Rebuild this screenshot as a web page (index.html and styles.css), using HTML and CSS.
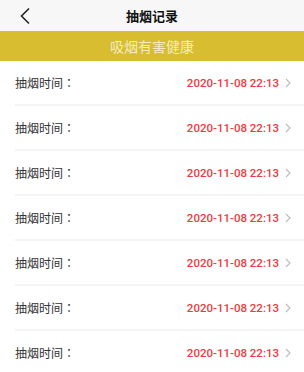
FILE: index.html
```html
<!DOCTYPE html>
<html>
<head>
<meta charset="utf-8">
<link rel="stylesheet" href="styles.css">
</head>
<body>
<div class="header">
  <svg class="back" width="12" height="18" viewBox="0 0 12 18"><path d="M10 1.5 L2.5 9 L10 16.5" fill="none" stroke="#222" stroke-width="1.6"/></svg>
  <div class="title">抽烟记录</div>
</div>
<div class="banner">吸烟有害健康</div>
<div class="list">
  <div class="row"><span class="label">抽烟时间<span class="colon">：</span></span><span class="time">2020-11-08 22:13</span><svg class="chev" width="6" height="10" viewBox="0 0 6 10"><path d="M1 1 L5 5 L1 9" fill="none" stroke="#bbb" stroke-width="1.1"/></svg></div>
  <div class="row"><span class="label">抽烟时间<span class="colon">：</span></span><span class="time">2020-11-08 22:13</span><svg class="chev" width="6" height="10" viewBox="0 0 6 10"><path d="M1 1 L5 5 L1 9" fill="none" stroke="#bbb" stroke-width="1.1"/></svg></div>
  <div class="row"><span class="label">抽烟时间<span class="colon">：</span></span><span class="time">2020-11-08 22:13</span><svg class="chev" width="6" height="10" viewBox="0 0 6 10"><path d="M1 1 L5 5 L1 9" fill="none" stroke="#bbb" stroke-width="1.1"/></svg></div>
  <div class="row"><span class="label">抽烟时间<span class="colon">：</span></span><span class="time">2020-11-08 22:13</span><svg class="chev" width="6" height="10" viewBox="0 0 6 10"><path d="M1 1 L5 5 L1 9" fill="none" stroke="#bbb" stroke-width="1.1"/></svg></div>
  <div class="row"><span class="label">抽烟时间<span class="colon">：</span></span><span class="time">2020-11-08 22:13</span><svg class="chev" width="6" height="10" viewBox="0 0 6 10"><path d="M1 1 L5 5 L1 9" fill="none" stroke="#bbb" stroke-width="1.1"/></svg></div>
  <div class="row"><span class="label">抽烟时间<span class="colon">：</span></span><span class="time">2020-11-08 22:13</span><svg class="chev" width="6" height="10" viewBox="0 0 6 10"><path d="M1 1 L5 5 L1 9" fill="none" stroke="#bbb" stroke-width="1.1"/></svg></div>
  <div class="row"><span class="label">抽烟时间<span class="colon">：</span></span><span class="time">2020-11-08 22:13</span><svg class="chev" width="6" height="10" viewBox="0 0 6 10"><path d="M1 1 L5 5 L1 9" fill="none" stroke="#bbb" stroke-width="1.1"/></svg></div>
</div>
</body>
</html>
```
FILE: styles.css
```css
html, body { margin: 0; padding: 0; background: #fff; }
body {
  font-family: "Liberation Sans", "Noto Sans CJK SC", sans-serif;
  width: 304px;
  overflow: hidden;
}
.header {
  height: 31px;
  background: #f7f7f7;
  display: flex;
  align-items: center;
  justify-content: center;
  position: relative;
}
.back { position: absolute; left: 19px; top: 7px; }
.title {
  font-size: 13px;
  font-weight: bold;
  color: #111;
  font-family: "Noto Sans CJK SC", sans-serif;
}
.banner {
  height: 30px;
  background: #d7bd2f;
  color: #f3ecc4;
  font-family: "Noto Sans CJK SC", sans-serif;
  font-size: 14px;
  display: flex;
  align-items: center;
  justify-content: center;
}
.row {
  height: 43px;
  margin-left: 15px;
  border-bottom: 2px solid #f4f4f4;
  display: flex;
  align-items: center;
  padding-right: 13px;
}
.label {
  flex: 1;
  font-family: "Noto Sans CJK SC", sans-serif;
  font-size: 12px;
  color: #333;
}
.colon { font-family: "Noto Sans CJK TC", sans-serif; }
.time {
  color: #ee3b40;
  font-family: Roboto, "Liberation Sans", sans-serif;
  font-weight: 500;
  font-size: 11.5px;
  margin-right: 6px;
}
.chev { display: block; }
```
